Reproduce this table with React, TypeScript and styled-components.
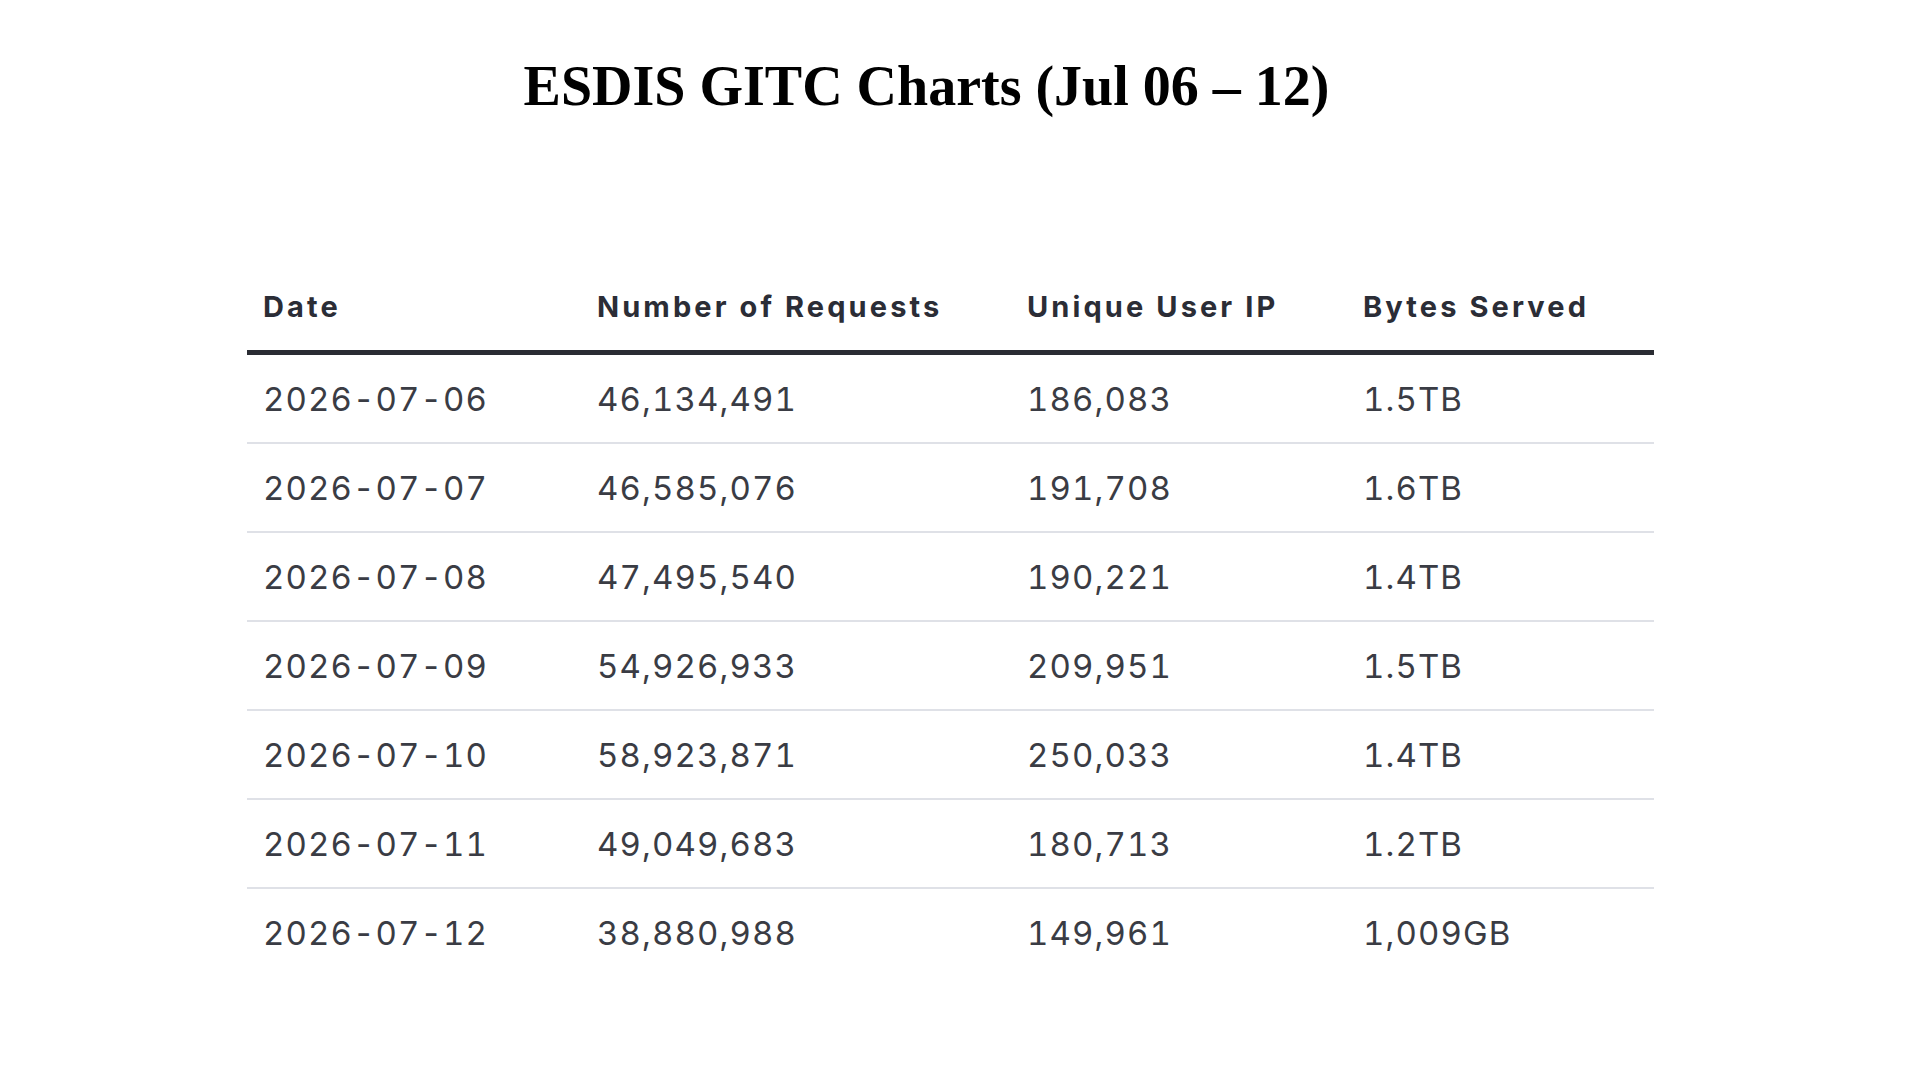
import styled, { createGlobalStyle } from "styled-components";

const GlobalStyle = createGlobalStyle`
  html, body {
    margin: 0;
    padding: 0;
    background: #ffffff;
  }
`;

const rows = [
	["2026-07-06", "46,134,491", "186,083", "1.5TB"],
	["2026-07-07", "46,585,076", "191,708", "1.6TB"],
	["2026-07-08", "47,495,540", "190,221", "1.4TB"],
	["2026-07-09", "54,926,933", "209,951", "1.5TB"],
	["2026-07-10", "58,923,871", "250,033", "1.4TB"],
	["2026-07-11", "49,049,683", "180,713", "1.2TB"],
	["2026-07-12", "38,880,988", "149,961", "1,009GB"],
];

const headers = ["Date", "Number of Requests", "Unique User IP", "Bytes Served"];

export default function App() {
	return (
		<Page>
			<GlobalStyle />
			<Title>ESDIS GITC Charts (Jul 06 – 12)</Title>
			<Table>
				<HeadRow>
					{headers.map((h) => (
						<HeadCell key={h}>{h}</HeadCell>
					))}
				</HeadRow>
				{rows.map((r, i) => (
					<Row key={r[0]} last={i === rows.length - 1}>
						{r.map((c, j) => (
							<Cell key={j}>{c}</Cell>
						))}
					</Row>
				))}
			</Table>
		</Page>
	);
}

const Page = styled.div`
  width: 1920px;
  height: 1080px;
  background: #ffffff;
  overflow: hidden;
`;

const Title = styled.h1`
  margin: 54px 0 0;
  padding-right: 67px;
  text-align: center;
  font-family: "Liberation Serif", "Times New Roman", serif;
  font-weight: bold;
  font-size: 56px;
  line-height: 64px;
  color: #000000;
`;

const Table = styled.div`
  width: 1407px;
  margin: 144px 0 0 247px;
  font-family: Inter, "Noto Sans", sans-serif;
`;

const columns = "334px 430px 336px 307px";

const HeadRow = styled.div`
  display: grid;
  grid-template-columns: ${columns};
  height: 88px;
  align-items: center;
  border-bottom: 5px solid #2a2c33;
`;

const HeadCell = styled.div`
  padding-left: 16px;
  font-size: 29px;
  font-weight: 700;
  letter-spacing: 3.1px;
  color: #2b2d36;
`;

const Row = styled.div<{ last?: boolean }>`
  display: grid;
  grid-template-columns: ${columns};
  height: 87px;
  align-items: center;
  border-bottom: ${(p) => (p.last ? "none" : "2px solid #dfe1e7")};
`;

const Cell = styled.div`
  padding-left: 16px;
  font-size: 33px;
  font-weight: 400;
  letter-spacing: 1.1px;
  font-variant-numeric: tabular-nums;
  color: #3a3c44;
`;
